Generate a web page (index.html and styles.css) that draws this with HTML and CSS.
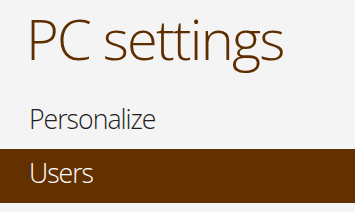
FILE: index.html
```html
<!DOCTYPE html>
<html lang="en">

<head>
    <meta charset="UTF-8">
    <meta name="viewport" content="width=device-width, initial-scale=1.0">
    <title>PC settings</title>
    <link rel="stylesheet" href="styles.css">
</head>

<body>

    <header class="settings-header">
        <h1 class="settings-title">PC settings</h1>
    </header>

    <nav class="settings-nav">
        <div class="nav-item">Personalize</div>
        <div class="nav-item selected">Users</div>
    </nav>

</body>

</html>
```

FILE: styles.css
```css
body {
    margin: 0;
    height: 100vh;
    background-color: #f4f4f4;
    font-family: "Open Sans", "Noto Sans", sans-serif;
    overflow: hidden;
}

.settings-header {
    height: 95px;
    padding-left: 26px;
    box-sizing: border-box;
    padding-top: 10px;
}

.settings-title {
    margin: 0;
    font-size: 56px;
    line-height: 56px;
    font-weight: 300;
    letter-spacing: -1.8px;
    color: #5f2e00;
}

.nav-item {
    height: 54px;
    line-height: 48px;
    padding-bottom: 6px;
    padding-left: 29px;
    box-sizing: border-box;
    font-size: 26.67px;
    font-weight: 300;
    letter-spacing: -1px;
    color: #1e1e1e;
}

/* selected item */
.nav-item.selected {
    background-color: #633000;
    color: #ffffff;
}
```
